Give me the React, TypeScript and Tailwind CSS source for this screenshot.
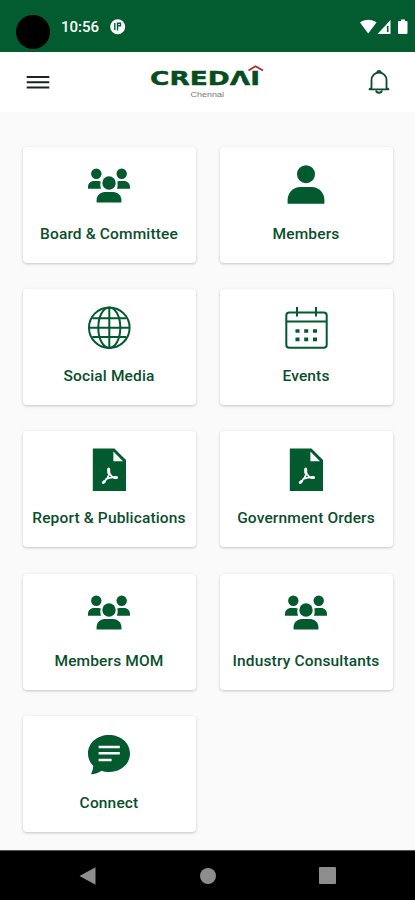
import { ReactElement } from "react";

const GREEN = "#035a2e";

const PeopleIcon = (): ReactElement => (
  <svg width="44" height="44" viewBox="0 0 44 44" fill={GREEN}>
    <circle cx="9.3" cy="9.7" r="5.2" />
    <circle cx="34.7" cy="9.7" r="5.2" />
    <path d="M1 24.7V23c0-3.4 2.6-5.9 6-5.9h4.4c.9 0 1.7.2 2.4.5-.8 2.5-.6 4.9.3 7.100z" />
    <path d="M43 24.7V23c0-3.4-2.6-5.9-6-5.9h-4.4c-.9 0-1.7.2-2.400.5.8 2.500.6 4.900-.3 7.100z" />
    <circle cx="22" cy="19" r="6.7" />
    <path d="M9.600 38.600v-2.300c0-4.600 3.500-8.200 8.200-8.200h8.400c4.700 0 8.200 3.600 8.200 8.200v2.300z" />
  </svg>
);

const UserIcon = (): ReactElement => (
  <svg width="44" height="44" viewBox="0 0 44 44" fill={GREEN}>
    <circle cx="22" cy="10.2" r="9" />
    <path d="M3.6 39.800v-3.700c0-7.200 5.600-13 12.700-13h11.400c7.100 0 12.700 5.800 12.700 13v3.700z" />
  </svg>
);

const GlobeIcon = (): ReactElement => (
  <svg width="44" height="44" viewBox="0 0 44 44" fill="none" stroke={GREEN} strokeWidth="2">
    <circle cx="22.3" cy="21.7" r="20.3" />
    <ellipse cx="22.3" cy="21.7" rx="11" ry="20.3" />
    <path d="M22.3 1.4v40.6M2 21.7h40.6M5.3 12.3h34M5.3 31.1h34" />
  </svg>
);

const CalendarIcon = (): ReactElement => (
  <svg width="44" height="44" viewBox="0 0 44 44" fill="none" stroke={GREEN} strokeWidth="2">
    <rect x="2.3" y="6.5" width="40.4" height="35.3" rx="3" />
    <path d="M2.3 15.5h40.4M13 1v9.5M32 1v9.5" />
    <path d="M11.5 25h4M20.2 25h4M29 25h4M11.5 33.4h4M20.2 33.4h4M29 33.4h4" strokeWidth="3.6" />
  </svg>
);

const PdfIcon = (): ReactElement => (
  <svg width="44" height="44" viewBox="0 0 44 44">
    <path d="M5.800.6h21.600L39 12v31H5.800z" fill={GREEN} />
    <path d="M26.400 3.600v9.600h9.600z" fill="#fff" />
    <g fill="none" stroke="#fff" strokeLinecap="round" strokeLinejoin="round">
      <path d="M21.700 21v3.500M17.300 33.600l-1 .9M27.500 29.400l2 .2" strokeWidth="3" />
      <path d="M21.700 22c.2 3 1.600 5.300 4.300 7.200M22.400 26c-1.200 3.200-3 5.700-5.400 7.900M18.800 31.200c2.800-1.500 6-2.200 9.700-1.700" strokeWidth="1.800" />
    </g>
  </svg>
);

const ChatIcon = (): ReactElement => (
  <svg width="44" height="44" viewBox="0 0 44 44">
    <path d="M22 2C10.200 2 1 10 1 20.500c0 4.800 1.900 9 5.200 12.200-.1 3.300-.8 5.500-1.900 7.600-.3.600.1 1.100.8 1 4-.5 7.100-1.700 9.200-3.600 2.400.8 5 1.300 7.700 1.300 11.800 0 21-8 21-18.500S33.800 2 22 2z" fill={GREEN} />
    <path d="M11.6 14h21.200M11.600 20.300h21.200M11.600 27h13" stroke="#fff" strokeWidth="2.5" />
  </svg>
);

const items: { title: string; icon: ReactElement }[] = [
  { title: "Board & Committee", icon: <PeopleIcon /> },
  { title: "Members", icon: <UserIcon /> },
  { title: "Social Media", icon: <GlobeIcon /> },
  { title: "Events", icon: <CalendarIcon /> },
  { title: "Report & Publications", icon: <PdfIcon /> },
  { title: "Government Orders", icon: <PdfIcon /> },
  { title: "Members MOM", icon: <PeopleIcon /> },
  { title: "Industry Consultants", icon: <PeopleIcon /> },
  { title: "Connect", icon: <ChatIcon /> },
];

const StatusBar = (): ReactElement => (
  <div className="flex h-[52px] shrink-0 bg-[#035c30] pl-4 text-white">
    <div className="mt-[15px] size-[34px] rounded-full bg-black" />
    <p className="mt-[17px] ml-[11px] w-[39px] text-[15px] leading-5 font-medium whitespace-nowrap">10:56</p>
    <svg className="mt-[19px] ml-[10px]" width="16" height="16" viewBox="0 0 16 16">
      <circle cx="7.7" cy="7.8" r="7.5" fill="#fff" />
      <path d="M4.800 4v7M7.500 11.500V4.200h3v2.600h-3" fill="none" stroke="#035c30" strokeWidth="1.4" />
    </svg>
    <svg className="mt-[19px] mr-[6px] ml-auto" width="50" height="16" viewBox="0 0 50 16" fill="#fff">
      <path d="M1 3.500C5.500-.1 13-.1 17.500 3.500L9.200 14.500z" />
      <path d="M18.500 15L31.500 1v14z" />
      <path d="M28.700 7v6" stroke="#035c30" strokeWidth="1.6" />
      <path d="M39 3q0-1 1-1h2V.5h4V2h1.500q1 0 1 1v11q0 1-1 1H40q-1 0-1-1z" />
    </svg>
  </div>
);

const Header = (): ReactElement => (
  <header className="flex h-[60px] shrink-0 items-start justify-between bg-white pr-[24px] pl-[26px]">
    <svg className="mt-[22px]" width="24" height="16" viewBox="0 0 24 16">
      <path d="M.7 3h22.600M.7 8.300h22.600M.7 13.600h22.600" stroke="#1b2520" strokeWidth="2" />
    </svg>
    <svg className="mt-[10px] -ml-px" width="116" height="40" viewBox="0 0 116 40">
      <text x="0" y="22.700" textLength="110" lengthAdjust="spacingAndGlyphs" fill="#064d20" stroke="#064d20" strokeWidth=".4" className="font-['DejaVu_Sans'] text-[19.5px] font-bold">CREDAI</text>
      <path d="M90 13.500L85.500 23.200h9z" fill="#fff" />
      <path d="M98.500 8.400l7-4.200 7.500 4.200" fill="none" stroke="#b3262f" strokeWidth="1.7" />
      <text x="40.5" y="34.5" textLength="33.5" lengthAdjust="spacingAndGlyphs" fill="#777" className="font-['Liberation_Sans'] text-[8px]">Chennai</text>
    </svg>
    <svg className="mt-[17px]" width="24" height="26" viewBox="0 0 24 26" fill="none" stroke="#0b4a2a" strokeWidth="1.8">
      <path d="M4.500 18.800V11c0-4 3-7.300 7.500-7.300s7.500 3.300 7.500 7.300v7.800l2 1.500H2.500z" strokeLinejoin="round" />
      <path d="M9 21.500c.5 3 5.500 3 6 0M10.300 3.500c0-2.200 3.400-2.200 3.400 0" />
    </svg>
  </header>
);

const NavBar = (): ReactElement => (
  <nav className="flex h-[50px] shrink-0 items-center justify-between border-t border-[#555] bg-black pr-[79px] pl-[79px]">
    <svg width="18" height="18" viewBox="0 0 18 18" fill="#8d8d8d">
      <path d="M.5 9L16.500.3v17.400z" />
    </svg>
    <div className="size-4 rounded-full bg-[#8d8d8d]" />
    <div className="size-[17px] rounded-[1px] bg-[#8d8d8d]" />
  </nav>
);

const App = (): ReactElement => {
  return (
    <div className="flex h-[900px] w-[415px] flex-col overflow-hidden bg-[#fafafa] font-[Roboto,sans-serif]">
      <StatusBar />
      <Header />
      <main className="grid flex-1 auto-rows-[116px] grid-cols-2 content-start gap-x-6 gap-y-[26.3px] pt-[34.7px] pr-[22px] pl-[23px]">
        {items.map((item) => (
          <button
            key={item.title}
            className="flex flex-col items-center rounded bg-white pt-[17px] pr-px shadow-[0_1px_3px_rgba(0,0,0,0.22)]"
          >
            {item.icon}
            <span className="mt-4 text-[15.5px] leading-5 font-medium tracking-[0.15px] whitespace-nowrap text-[#0a4f2b]">
              {item.title}
            </span>
          </button>
        ))}
      </main>
      <NavBar />
    </div>
  );
};

export default App;
